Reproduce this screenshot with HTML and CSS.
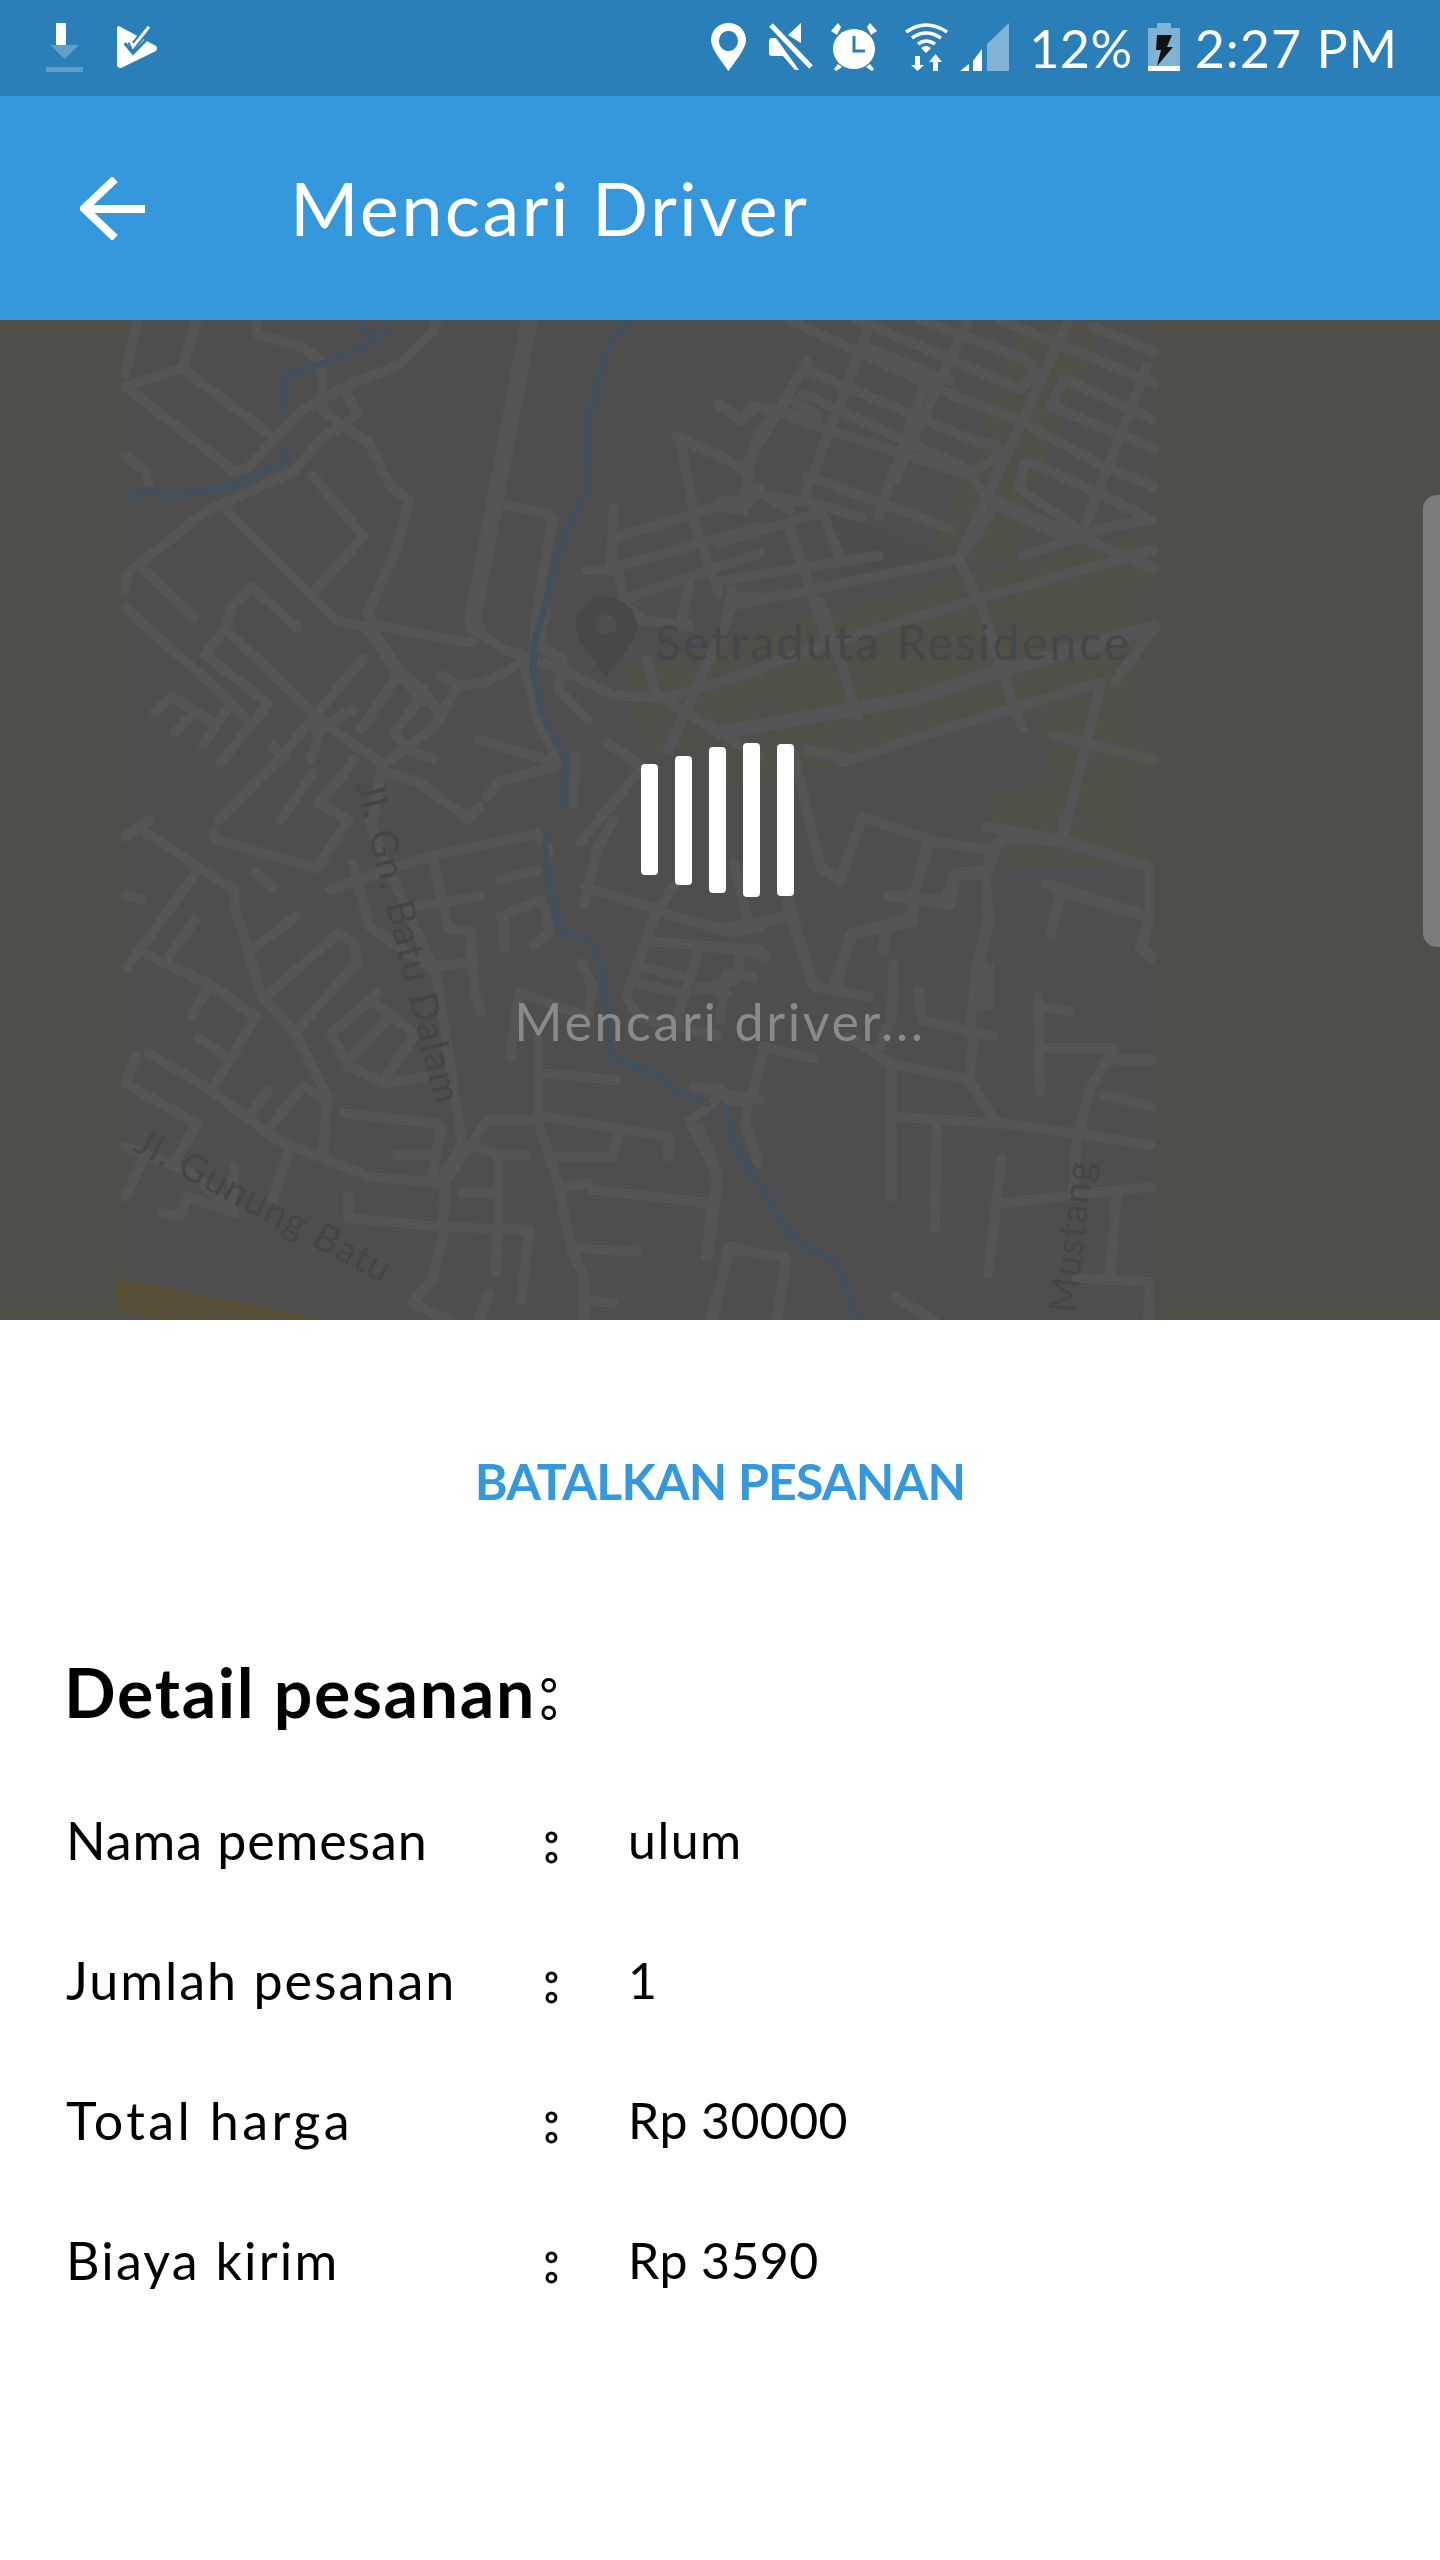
FILE: index.html
```html
<!DOCTYPE html>
<html lang="id">
<head>
<meta charset="utf-8">
<title>Mencari Driver</title>
<link rel="stylesheet" href="styles.css">
</head>
<body>
<div class="page">
  <header class="status">
    <div class="status-left">
      <svg class="ic-dl" viewBox="0 0 37 49"><rect x="10" width="10" height="22" fill="#fff"/><path d="M4.500 22H33L18.500 36Z" fill="#fff" fill-opacity=".25"/><rect x="0" y="44" width="37" height="5" fill="#fff" fill-opacity=".25"/></svg>
      <svg class="ic-play" viewBox="0 0 40 42"><path d="M2 0 39 20Q41 22 39 25L4 42Q0 42 0 39V2Q0 0 2 0Z" fill="#fff"/><path d="M13.800 15.700 16 20.700 32 .7" fill="none" stroke="#2a7fb8" stroke-width="7"/><path d="M13.800 15.700 16 20.700 32 .7" fill="none" stroke="#fff" stroke-width="3"/><path d="M7.800 17.300 16 27.300 29 14" fill="none" stroke="#2a7fb8" stroke-width="3"/></svg>
    </div>
    <div class="status-right">
      <svg class="ic-loc" viewBox="0 0 35 48"><path fill-rule="evenodd" d="M17.500 0C8 0 0 7 0 17 0 26 12 40 17.500 48 23 40 35 26 35 17 35 7 27 0 17.500 0ZM17.500 8A9.500 10 0 1 1 17.400 8Z" fill="#fff"/></svg>
      <svg class="ic-mute" viewBox="0 0 44 48"><path d="M0 18Q0 15 3 15H7L30 47H26L14 33H3Q0 33 0 30ZM19 12 32 0V20Z" fill="#fff"/><path d="M2 2 42 44" stroke="#fff" stroke-width="5"/></svg>
      <svg class="ic-alarm" viewBox="0 0 46 48"><ellipse cx="23" cy="26" rx="21" ry="20" fill="#fff"/><path d="M6 12 0 8 7 0 10 4ZM40 12 46 8 39 0 36 4ZM7 41 3 46 5 48 11 44ZM39 41 43 46 41 48 35 44Z" fill="#fff"/><path d="M23 13V28H34" fill="none" stroke="#2a7fb8" stroke-width="3"/></svg>
      <svg class="ic-wifi" viewBox="0 0 43 48"><g fill="none" stroke="#fff" stroke-width="3.500"><path d="M1 9Q21-5 42 9M7 15Q21 5 36 15M13 21Q21 15 30 21"/></g><path d="M21 30 16 25Q21 21 26 25ZM10 33H15V42H19L12.500 48 6 42H10ZM28 48H33V39H37L30.500 31 24 39H28Z" fill="#fff"/></svg>
      <svg class="ic-signal" viewBox="0 0 49 48"><path d="M49 0V48H27V21Z" fill="#fff" fill-opacity=".4"/><path d="M22 26V48H13V38ZM9 41V48H0Z" fill="#fff"/></svg>
      <span class="status-pct">12%</span>
      <svg class="ic-batt" viewBox="0 0 32 48"><path d="M9 0H23V5H32V48H0V5H9Z" fill="#fff" fill-opacity=".4"/><rect y="43" width="32" height="5" fill="#fff"/><path d="M9 12H24L19 24H25L9 43 13 27H8Z" fill="#111"/></svg>
      <span class="status-time">2:27 PM</span>
    </div>
  </header>

  <div class="appbar">
    <svg class="ic-back" viewBox="0 0 65 63"><path d="M65 32H3M35 2 4 31.500 35 61" fill="none" stroke="#fff" stroke-width="8"/></svg>
    <h1 class="appbar-title">Mencari Driver</h1>
  </div>

  <section class="map">
    <svg class="map-canvas" viewBox="0 0 1440 1000">
      <rect class="map-land" x="127" y="0" width="1022" height="1000"/>

      <!-- blocks and water -->
      <g transform="translate(720 0) scale(.4592 .4209)">
        <path class="tan" d="M650 40 830 0 820 50 720 300 640 570 445 575 560 300Z"/>
        <path class="tan" d="M0 960V760L560 600 935 500V1300L630 1300 580 1130 690 1110 720 1000 640 920 270 1040 190 1080 0 1110Z"/>
        <path class="pond" d="M235 445 475 560 265 640Z"/>
      </g>
      <g transform="translate(100 0) scale(.4209 .3333)">
        <path class="tan" d="M1240 1040 1568 930V1280L1290 1300Z"/>
      </g>
      <g transform="translate(100 500) scale(.4209 .3333)">
        <path class="yellow" d="M40 1400Q45 1385 60 1385L520 1500H175L55 1470Q40 1465 40 1450Z"/>
      </g>

      <!-- roads, upper left -->
      <g class="roads" transform="translate(100 0) scale(.4209 .3333)">
        <path d="M90 0 60 165M230 0 195 145 60 200M195 145 400 340M60 200 320 455 350 445 480 270 590 195 710 135 790 35 800 0"/>
        <path d="M370 0 375 45 480 80 525 125 530 270 575 315 640 370 690 500 735 540 700 700 635 880 650 915 860 965 885 965"/>
        <path d="M580 205 610 280 575 320 530 350 460 455 250 575 65 760 60 810M505 465 625 650 505 820M300 570 560 900 640 925 710 1050 770 1110 810 1190 790 1225 700 1310 670 1330 540 1220 300 930"/>
        <path d="M60 410 105 450 115 490M105 750 225 895M60 865 280 1110 350 1200M470 925 360 800 315 855 295 930 250 1005 400 1150 285 1330M625 1015 510 1190 430 1310 280 1500M600 1170 510 1230M710 1060 620 1230M770 1120 700 1240 730 1290 790 1315M130 1175 170 1130 270 1210M210 1195 180 1235M300 1170 245 1275M530 1220 500 1315M505 1360 430 1500M410 1280 440 1310M605 1320 520 1450 590 1500M670 1330 650 1500M670 1350 760 1390 870 1490M900 1460 870 1500"/>
        <path d="M960 555 1065 580 1075 600 1040 850 1030 990M1060 870 1040 980 1100 1015 1090 1110 1160 1200M810 1065 850 1095 910 1090 985 1040M850 1095 810 1190M1000 1000 1040 1200 1090 1330 900 1260M1080 1340 950 1385 920 1430M1130 1310 1125 1450M1205 1270 1290 1340M1220 565 1215 750M1155 750 1230 750 1250 860 1290 900 1400 920"/>
        <path d="M1230 650 1470 560 1530 570 1568 500M1230 740 1568 620M1260 830 1568 700M1405 580 1470 820M1400 790 1380 920M1520 830 1568 830M1370 350 1540 450 1525 570M1380 370 1410 570M1470 255 1525 300 1568 260M1500 810 1490 900 1350 1290M1345 1140 1568 1310M1300 1020 1320 1120M1290 1340 1140 1568"/>
        <path d="M880 920 960 990 1080 1040 1220 1125 1340 1135 1568 1050"/>
        <path d="M640 925 700 1040 770 1140" class="road-md"/>
        <path d="M1020 0 885 900 900 935" class="road-wide"/>
      </g>

      <!-- roads, upper right -->
      <g class="roads" transform="translate(720 0) scale(.4592 .4209)">
        <path d="M150 0 510 180 645 235 830 345 945 395M810 15 945 75M610 0 945 150M440 0 670 95 685 125 655 165 300 0M720 205 945 305M330 70 500 145M180 115 560 290 600 295 605 325 550 360 180 175M110 210 205 250 545 370 580 420 945 590M190 100 60 340M320 30 180 430M450 140 345 465M540 0 380 380M760 0 520 565M930 110 795 490M750 140 720 205 740 210M750 140 940 235M665 340 650 400 775 490 750 515 600 440M680 340 840 420 940 475 850 490 660 560"/>
        <path d="M0 200 45 240 70 205 120 215 80 280 55 400 50 430 0 430M0 320 55 360M50 420 75 400 150 450M145 185 215 225 205 240 135 215M190 370 500 495M70 410 220 440 310 470M215 440 265 570M0 530 210 460M0 620 345 560M20 680 520 570 590 460M520 570 570 680 640 920 660 970M220 670 300 940M150 490 240 780"/>
        <path d="M0 860 230 770 570 660 945 545M160 1030 220 1300 260 1335 310 1180 470 1240 590 1260 630 1230 745 1240 935 1300 935 1410 915 1490 940 1515M270 1050 450 985 830 860 800 1000 745 1240M725 985 945 1045M190 1020 270 1040M600 1260 580 1320 510 1320 490 1380 380 1365M450 1250 420 1380 420 1430 290 1460 250 1568M710 1340 760 1365 920 1415M740 1370 720 1455M578 1340 585 1430 560 1568M150 1380 200 1568M365 1450 355 1500M378 1530 378 1568M0 1445 140 1420M0 1490 100 1510M30 1290 60 1420M860 860 945 730"/>
        <path d="M0 980 420 900 590 840 945 730" class="road-md"/>
      </g>

      <!-- roads, lower left -->
      <g class="roads" transform="translate(100 500) scale(.4209 .3333)">
        <path d="M60 50 120 0M110 40 320 210 320 260 385 530 465 640 540 830 530 1000M270 40 280 60 515 145 590 0M370 160 410 200M230 155 65 440M100 395 165 435 270 500 370 590 265 810M60 225 100 240M225 300 165 410M465 290 370 380M395 530 565 340 605 370 610 430 460 640M250 515 220 585M235 655 300 710M115 700 250 800 420 960 640 1070 810 1090 830 1070 920 900 1040 900 1090 1100 1120 1290 1150 1370 1150 1500"/>
        <path d="M85 710 60 790 230 910 180 1020M400 810 360 880M480 800 400 930M480 800 530 830M580 880 800 910 810 930 790 1060M705 1005 790 1005M60 980 220 1060 320 1180M900 985 945 1005 1010 1005M945 1005 945 1230M860 1120 945 1120M590 1130 590 1195 810 1220 1020 1230 1000 1440M945 1230 940 1355M820 1080 815 1250 790 1380 740 1450 830 1500M450 990 410 1140M60 1130 110 1000M150 1180 190 1190 210 1130 320 1180M320 1040 310 1170"/>
        <path d="M640 0 680 130 800 470 860 970 810 1080M545 210 780 110 1040 40 1070 100M600 130 640 320 780 440 870 430M790 120 830 330 880 330 890 520 905 575M740 260 900 230M950 180 1040 150M950 290 1050 240 1070 340 1030 375M960 290 960 385M1145 430 1170 500 1160 590M1040 660 1040 890M975 710 990 560 1000 520 1160 590M1060 760 1225 780M1055 890 1350 950 1350 1010M1230 950 1215 1010 1070 1010M1100 1100 1160 1090 1170 1110 1455 1150 1440 1310M1130 1285 1275 1295M1160 1440 1220 1450M925 1420 900 1500M1500 1280 1450 1500M1500 1280 1568 1300M660 520 550 640 590 740 680 790 770 770M640 540 750 640 680 770M690 590 590 720"/>
        <path d="M1150 250 1180 90 1220 0M1150 200 1330 270 1360 200M1320 280 1250 530 1280 590 1470 650M1340 280 1500 340 1568 320M1320 365 1568 390M1290 440 1380 470M1420 400 1370 600M1280 490 1380 520M1410 800 1480 820 1568 840M1480 820 1400 905 1470 1070 1455 1150M1520 400 1510 480 1420 510"/>
      </g>

      <!-- roads, lower right -->
      <g class="roads" transform="translate(700 500) scale(.3333)">
        <path d="M860 20 1090 60 1350 140 1350 280 1330 380 1355 410M1090 0 1090 60M1040 190 1320 280M1085 220 1050 340M690 60 640 225M570 228 750 255 770 160 860 150 880 80 920 50M640 240 640 290 450 340 410 500M555 340 550 390M260 250 340 500 505 530M580 435 575 590 540 680M655 515 665 600 880 650M820 650 810 770M860 200 865 300 830 430 810 640M445 650 570 730 805 780 870 880 900 910 1130 940 1350 975M575 730 575 1130M575 890 900 910M710 920 705 1225"/>
        <path d="M1015 530 1020 815M1025 560 1110 575M1025 685 1240 685 1170 810 1130 960 1120 1100M1240 720 1355 720M1210 825 1355 860M905 1015 865 1360M905 1150 1355 1100M1250 1120 1230 1370M1130 1375 1350 1385 1345 1500M585 1430 700 1500M190 680 340 715M190 680 160 815M0 800 65 810 85 840 145 845 135 910 175 1030M85 1285 260 1315 230 1500M85 1285 40 1500M45 1070 55 1070 25 1310M0 920 55 1070M0 1150 40 1150M0 305 90 340 250 290M0 380 140 390 190 410M120 420 110 460 160 475M80 460 60 600M0 500 80 520"/>
        <path d="M858 430 860 570" class="road-wide"/>
      </g>

      <!-- rivers -->
      <g class="river" transform="translate(100 0) scale(.4209 .3333)">
        <path d="M1255 0 1205 85 1160 300 1155 525 1110 620 1030 980 1030 1060 1050 1180 1105 1320 1100 1470M65 535 110 510 175 530 320 495 445 420 425 380M640 70 540 125 445 165 430 280M620 10 650 60 690 25"/>
      </g>
      <g class="river" transform="translate(100 500) scale(.4209 .3333)">
        <path d="M1065 30 1055 80 1090 330 1160 360 1190 430 1205 560 1215 710 1330 770 1370 815 1450 855M1485 865 1520 1010 1568 1100"/>
      </g>
      <g class="river" transform="translate(700 500) scale(.3333)">
        <path d="M120 1000 260 1230 300 1270 405 1325 480 1500"/>
      </g>

      <!-- pin and labels -->
      <path class="pin" fill-rule="evenodd" d="M606 277C590 277 576 290 576 305 576 322 597 343 606 357 615 343 637 322 637 305 637 290 622 277 606 277ZM606 294A10.500 10.500 0 1 1 605.900 294Z"/>
      <text class="map-label" x="655" y="340">Setraduta Residence</text>
      <text class="map-label-sm" transform="translate(356 465) rotate(76)">Jl. Gn. Batu Dalam</text>
      <text class="map-label-sm" transform="translate(132 830) rotate(28)">Jl. Gunung Batu</text>
      <text class="map-label-md" transform="translate(1075 994) rotate(-83)">Mustang</text>
    </svg>

    <div class="scroll-tab"></div>

    <div class="loader">
      <div class="bars">
        <span class="bar bar-1"></span>
        <span class="bar bar-2"></span>
        <span class="bar bar-3"></span>
        <span class="bar bar-4"></span>
        <span class="bar bar-5"></span>
      </div>
      <p class="loader-text">Mencari driver...</p>
    </div>
  </section>

  <main class="sheet">
    <div class="cancel">BATALKAN PESANAN</div>
    <h2 class="detail-title">Detail pesanan<span class="ring title-colon">:</span></h2>
    <div class="detail-row"><span class="label-nama">Nama pemesan</span><span class="colon ring">:</span><span class="value-wide">ulum</span></div>
    <div class="detail-row"><span class="label-jumlah">Jumlah pesanan</span><span class="colon ring">:</span><span class="value">1</span></div>
    <div class="detail-row"><span class="label-total">Total harga</span><span class="colon ring">:</span><span class="value">Rp 30000</span></div>
    <div class="detail-row"><span class="label-biaya">Biaya kirim</span><span class="colon ring">:</span><span class="value">Rp 3590</span></div>
  </main>
</div>
</body>
</html>
```
FILE: styles.css
```css
* { box-sizing: border-box; }
html, body { margin: 0; padding: 0; }
body { background: #fff; font-family: "Lato", "Noto Sans", sans-serif; color: #000; }
.page { width: 1440px; height: 2560px; overflow: hidden; background: #fff; }

/* status bar */
.status { height: 96px; background: #2a7fb8; display: flex; justify-content: space-between; color: #fff; }
.status svg { display: block; flex: none; }
.status-left { display: flex; padding: 23px 0 0 46px; align-items: flex-start; }
.ic-dl { width: 37px; height: 49px; }
.ic-play { width: 40px; height: 42px; margin: 3px 0 0 34px; }
.status-right { display: flex; align-items: flex-start; padding: 22px 42px 0 0; }
.ic-loc { width: 35px; height: 48px; margin-top: 1px; }
.ic-mute { width: 44px; height: 48px; margin: 1px 0 0 23px; }
.ic-alarm { width: 46px; height: 48px; margin: 1px 0 0 18px; }
.ic-wifi { width: 43px; height: 48px; margin: 1px 0 0 28px; }
.ic-signal { width: 49px; height: 48px; margin: 1px 0 0 12px; }
.ic-batt { width: 32px; height: 48px; margin: 1px 0 0 15px; }
.status-pct { font-size: 52px; line-height: 52px; margin-left: 20px; letter-spacing: .5px; }
.status-time { font-size: 52px; line-height: 52px; margin-left: 15px; letter-spacing: 1px; }

/* app bar */
.appbar { height: 224px; background: #3598dc; display: flex; align-items: center; padding-left: 80px; color: #fff; }
.ic-back { width: 65px; height: 63px; flex: none; }
.appbar-title { margin: 0 0 0 145px; font-size: 74px; font-weight: 400; letter-spacing: 2.300px; line-height: 80px; }

/* map */
.map { position: relative; height: 1000px; background: #4f4e49; overflow: hidden; }
.map-canvas { display: block; width: 1440px; height: 1000px; }
.map-land { fill: #4e4e4e; }
.tan { fill: #504f48; }
.pond { fill: #4c4c4e; }
.yellow { fill: #574f38; stroke: #5f4f28; stroke-width: 2; vector-effect: non-scaling-stroke; }
.roads path { fill: none; stroke: #555; stroke-width: 10px; stroke-linecap: round; stroke-linejoin: round; vector-effect: non-scaling-stroke; }
.roads .road-md { stroke-width: 14px; }
.roads .road-wide { stroke-width: 17px; stroke-linecap: butt; }
.river path { fill: none; stroke: #43505c; stroke-width: 7px; stroke-linejoin: round; vector-effect: non-scaling-stroke; }
.pin { fill: #46484a; }
.map-label { fill: #454749; font-family: "Lato", sans-serif; font-size: 48px; letter-spacing: 2.500px; }
.map-label-sm { fill: #454545; font-family: "Lato", sans-serif; font-size: 38px; letter-spacing: 1.500px; }
.map-label-md { fill: #454545; font-family: "Lato", sans-serif; font-size: 38px; letter-spacing: 1px; }
.scroll-tab { position: absolute; right: 0; top: 175px; width: 17px; height: 452px; background: #7c7c7a; border-radius: 14px 0 0 14px; }

.loader { position: absolute; left: 0; right: 0; top: 423px; display: flex; flex-direction: column; align-items: center; }
.bars { display: flex; align-items: center; gap: 17px; height: 154px; margin-left: -5px; }
.bar { display: block; width: 17px; background: #fff; border-radius: 4px; }
.bar-1 { height: 111px; margin-top: -2px; }
.bar-2 { height: 129px; }
.bar-3 { height: 146px; }
.bar-4 { height: 154px; }
.bar-5 { height: 152px; }
.loader-text { margin: 94px 0 0; font-size: 52px; line-height: 60px; color: #8a8a8a; letter-spacing: 2.600px; }

/* lower sheet */
.sheet { padding: 130px 0 0 66px; }
.cancel { margin-left: -66px; text-align: center; color: #3598dc; font-size: 50px; font-weight: 700; line-height: 62px; letter-spacing: -.8px; }
.detail-title { margin: 140px 0 78px -2px; font-size: 68px; line-height: 80px; font-weight: 700; letter-spacing: 1.700px; }
.title-colon { margin-left: 3px; font-size: 76px; line-height: 60px; -webkit-text-stroke-width: 4px; }
.detail-row { display: grid; grid-template-columns: 478px 84px 1fr; height: 140px; font-size: 52px; line-height: 60px; }
.label-nama { letter-spacing: .9px; }
.label-jumlah { letter-spacing: 2px; }
.label-total { letter-spacing: 3.400px; }
.label-biaya { letter-spacing: 2.200px; }
.value { font-size: 50px; letter-spacing: .4px; }
.value-wide { font-size: 50px; letter-spacing: 1.500px; }
.colon { font-weight: 700; font-size: 58px; }
.ring { color: #fff; -webkit-text-stroke: 3px #000; }
```
